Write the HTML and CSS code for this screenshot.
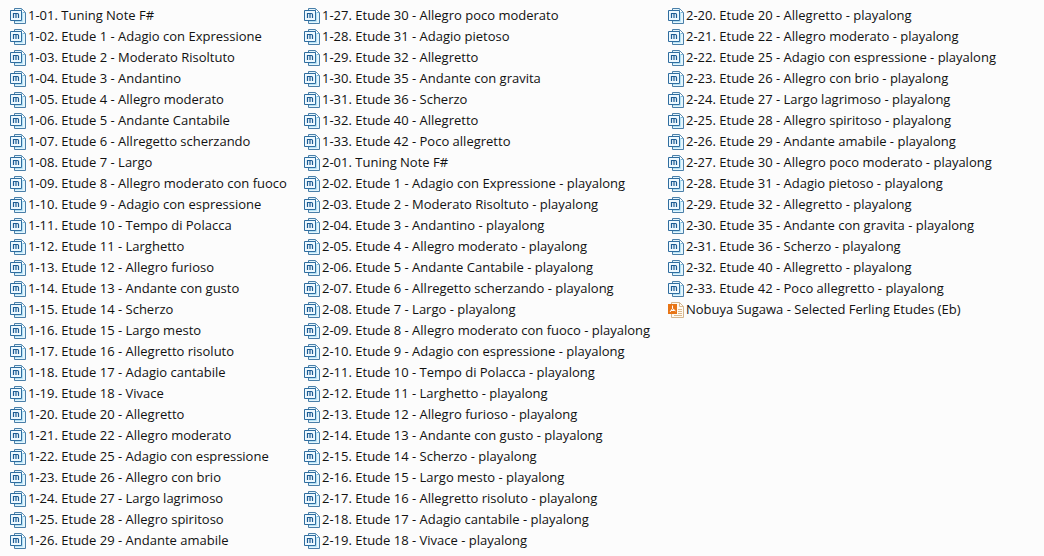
FILE: index.html
```html
<!DOCTYPE html>
<html lang="en">
<head>
<meta charset="utf-8">
<title>Selected Ferling Etudes</title>
<link rel="stylesheet" href="styles.css">
</head>
<body>
<svg class="sprite" aria-hidden="true">
  <symbol id="doc" viewBox="0 0 16 16">
    <path d="M4.500 .5H11.500L15.500 4.500V15.500H4.500Z" fill="#e4f5fd" stroke="#4a7fa8"/>
    <path d="M11.500 1V4.500H15" fill="#fff" stroke="#7db4d6"/>
    <path d="M12.500 4V13.500H5" fill="none" stroke="#b4e2f6"/>
    <path d="M.5 2.500H11.500V12.500H.5Z" fill="#eef9ff" stroke="#2f6d9f"/>
    <path d="M3.500 10V5.500H7.500Q8.500 5.500 8.500 6.500V10M6 6V10" fill="none" stroke="#1d5c93" stroke-width="1.200"/>
  </symbol>
  <symbol id="pdf" viewBox="0 0 16 16">
    <path d="M3.500 .5H11.500L15.500 4.500V15.500H3.500Z" fill="#fffaf2" stroke="#d5b68e"/>
    <path d="M11.500 .5V4.500H15.500M10 7.500H14M10 9.500H14M10 11.500H14M6 13.500H14" fill="none" stroke="#d9b98f"/>
    <path d="M0 2H9V12H0Z" fill="#e87516"/>
    <path d="M4.500 3.500V6.500L2 10M4.500 6.500L7.500 9M3 8.500H6.500" fill="none" stroke="#fff"/>
  </symbol>
</svg>
<main class="files">
  <ul class="column">
    <li class="file"><svg class="icon"><use href="#doc"/></svg>1-01. Tuning Note F#</li>
    <li class="file"><svg class="icon"><use href="#doc"/></svg>1-02. Etude 1 - Adagio con Expressione</li>
    <li class="file"><svg class="icon"><use href="#doc"/></svg>1-03. Etude 2 - Moderato Risoltuto</li>
    <li class="file"><svg class="icon"><use href="#doc"/></svg>1-04. Etude 3 - Andantino</li>
    <li class="file"><svg class="icon"><use href="#doc"/></svg>1-05. Etude 4 - Allegro moderato</li>
    <li class="file"><svg class="icon"><use href="#doc"/></svg>1-06. Etude 5 - Andante Cantabile</li>
    <li class="file"><svg class="icon"><use href="#doc"/></svg>1-07. Etude 6 - Allregetto scherzando</li>
    <li class="file"><svg class="icon"><use href="#doc"/></svg>1-08. Etude 7 - Largo</li>
    <li class="file"><svg class="icon"><use href="#doc"/></svg>1-09. Etude 8 - Allegro moderato con fuoco</li>
    <li class="file"><svg class="icon"><use href="#doc"/></svg>1-10. Etude 9 - Adagio con espressione</li>
    <li class="file"><svg class="icon"><use href="#doc"/></svg>1-11. Etude 10 - Tempo di Polacca</li>
    <li class="file"><svg class="icon"><use href="#doc"/></svg>1-12. Etude 11 - Larghetto</li>
    <li class="file"><svg class="icon"><use href="#doc"/></svg>1-13. Etude 12 - Allegro furioso</li>
    <li class="file"><svg class="icon"><use href="#doc"/></svg>1-14. Etude 13 - Andante con gusto</li>
    <li class="file"><svg class="icon"><use href="#doc"/></svg>1-15. Etude 14 - Scherzo</li>
    <li class="file"><svg class="icon"><use href="#doc"/></svg>1-16. Etude 15 - Largo mesto</li>
    <li class="file"><svg class="icon"><use href="#doc"/></svg>1-17. Etude 16 - Allegretto risoluto</li>
    <li class="file"><svg class="icon"><use href="#doc"/></svg>1-18. Etude 17 - Adagio cantabile</li>
    <li class="file"><svg class="icon"><use href="#doc"/></svg>1-19. Etude 18 - Vivace</li>
    <li class="file"><svg class="icon"><use href="#doc"/></svg>1-20. Etude 20 - Allegretto</li>
    <li class="file"><svg class="icon"><use href="#doc"/></svg>1-21. Etude 22 - Allegro moderato</li>
    <li class="file"><svg class="icon"><use href="#doc"/></svg>1-22. Etude 25 - Adagio con espressione</li>
    <li class="file"><svg class="icon"><use href="#doc"/></svg>1-23. Etude 26 - Allegro con brio</li>
    <li class="file"><svg class="icon"><use href="#doc"/></svg>1-24. Etude 27 - Largo lagrimoso</li>
    <li class="file"><svg class="icon"><use href="#doc"/></svg>1-25. Etude 28 - Allegro spiritoso</li>
    <li class="file"><svg class="icon"><use href="#doc"/></svg>1-26. Etude 29 - Andante amabile</li>
  </ul>
  <ul class="column">
    <li class="file"><svg class="icon"><use href="#doc"/></svg>1-27. Etude 30 - Allegro poco moderato</li>
    <li class="file"><svg class="icon"><use href="#doc"/></svg>1-28. Etude 31 - Adagio pietoso</li>
    <li class="file"><svg class="icon"><use href="#doc"/></svg>1-29. Etude 32 - Allegretto</li>
    <li class="file"><svg class="icon"><use href="#doc"/></svg>1-30. Etude 35 - Andante con gravita</li>
    <li class="file"><svg class="icon"><use href="#doc"/></svg>1-31. Etude 36 - Scherzo</li>
    <li class="file"><svg class="icon"><use href="#doc"/></svg>1-32. Etude 40 - Allegretto</li>
    <li class="file"><svg class="icon"><use href="#doc"/></svg>1-33. Etude 42 - Poco allegretto</li>
    <li class="file"><svg class="icon"><use href="#doc"/></svg>2-01. Tuning Note F#</li>
    <li class="file"><svg class="icon"><use href="#doc"/></svg>2-02. Etude 1 - Adagio con Expressione - playalong</li>
    <li class="file"><svg class="icon"><use href="#doc"/></svg>2-03. Etude 2 - Moderato Risoltuto - playalong</li>
    <li class="file"><svg class="icon"><use href="#doc"/></svg>2-04. Etude 3 - Andantino - playalong</li>
    <li class="file"><svg class="icon"><use href="#doc"/></svg>2-05. Etude 4 - Allegro moderato - playalong</li>
    <li class="file"><svg class="icon"><use href="#doc"/></svg>2-06. Etude 5 - Andante Cantabile - playalong</li>
    <li class="file"><svg class="icon"><use href="#doc"/></svg>2-07. Etude 6 - Allregetto scherzando - playalong</li>
    <li class="file"><svg class="icon"><use href="#doc"/></svg>2-08. Etude 7 - Largo - playalong</li>
    <li class="file"><svg class="icon"><use href="#doc"/></svg>2-09. Etude 8 - Allegro moderato con fuoco - playalong</li>
    <li class="file"><svg class="icon"><use href="#doc"/></svg>2-10. Etude 9 - Adagio con espressione - playalong</li>
    <li class="file"><svg class="icon"><use href="#doc"/></svg>2-11. Etude 10 - Tempo di Polacca - playalong</li>
    <li class="file"><svg class="icon"><use href="#doc"/></svg>2-12. Etude 11 - Larghetto - playalong</li>
    <li class="file"><svg class="icon"><use href="#doc"/></svg>2-13. Etude 12 - Allegro furioso - playalong</li>
    <li class="file"><svg class="icon"><use href="#doc"/></svg>2-14. Etude 13 - Andante con gusto - playalong</li>
    <li class="file"><svg class="icon"><use href="#doc"/></svg>2-15. Etude 14 - Scherzo - playalong</li>
    <li class="file"><svg class="icon"><use href="#doc"/></svg>2-16. Etude 15 - Largo mesto - playalong</li>
    <li class="file"><svg class="icon"><use href="#doc"/></svg>2-17. Etude 16 - Allegretto risoluto - playalong</li>
    <li class="file"><svg class="icon"><use href="#doc"/></svg>2-18. Etude 17 - Adagio cantabile - playalong</li>
    <li class="file"><svg class="icon"><use href="#doc"/></svg>2-19. Etude 18 - Vivace - playalong</li>
  </ul>
  <ul class="column">
    <li class="file"><svg class="icon"><use href="#doc"/></svg>2-20. Etude 20 - Allegretto - playalong</li>
    <li class="file"><svg class="icon"><use href="#doc"/></svg>2-21. Etude 22 - Allegro moderato - playalong</li>
    <li class="file"><svg class="icon"><use href="#doc"/></svg>2-22. Etude 25 - Adagio con espressione - playalong</li>
    <li class="file"><svg class="icon"><use href="#doc"/></svg>2-23. Etude 26 - Allegro con brio - playalong</li>
    <li class="file"><svg class="icon"><use href="#doc"/></svg>2-24. Etude 27 - Largo lagrimoso - playalong</li>
    <li class="file"><svg class="icon"><use href="#doc"/></svg>2-25. Etude 28 - Allegro spiritoso - playalong</li>
    <li class="file"><svg class="icon"><use href="#doc"/></svg>2-26. Etude 29 - Andante amabile - playalong</li>
    <li class="file"><svg class="icon"><use href="#doc"/></svg>2-27. Etude 30 - Allegro poco moderato - playalong</li>
    <li class="file"><svg class="icon"><use href="#doc"/></svg>2-28. Etude 31 - Adagio pietoso - playalong</li>
    <li class="file"><svg class="icon"><use href="#doc"/></svg>2-29. Etude 32 - Allegretto - playalong</li>
    <li class="file"><svg class="icon"><use href="#doc"/></svg>2-30. Etude 35 - Andante con gravita - playalong</li>
    <li class="file"><svg class="icon"><use href="#doc"/></svg>2-31. Etude 36 - Scherzo - playalong</li>
    <li class="file"><svg class="icon"><use href="#doc"/></svg>2-32. Etude 40 - Allegretto - playalong</li>
    <li class="file"><svg class="icon"><use href="#doc"/></svg>2-33. Etude 42 - Poco allegretto - playalong</li>
    <li class="file"><svg class="icon"><use href="#pdf"/></svg>Nobuya Sugawa - Selected Ferling Etudes (Eb)</li>
  </ul>
</main>
</body>
</html>
```
FILE: styles.css
```css
body {
  margin: 0;
  background: #fcfcfc;
  color: #111;
  font-family: "Open Sans", "Noto Sans", sans-serif;
  font-size: 13px;
  line-height: 21px;
}

.sprite {
  display: block;
  width: 0;
  height: 0;
}

.files {
  display: grid;
  grid-template-columns: 274px 344px 1fr;
  column-gap: 20px;
  padding: 5px 10px;
}

.column {
  margin: 0;
  padding: 0;
  list-style: none;
}

.file {
  display: flex;
  align-items: center;
  gap: 2px;
  white-space: nowrap;
}

.icon {
  flex: none;
  width: 16px;
  height: 16px;
}
```
